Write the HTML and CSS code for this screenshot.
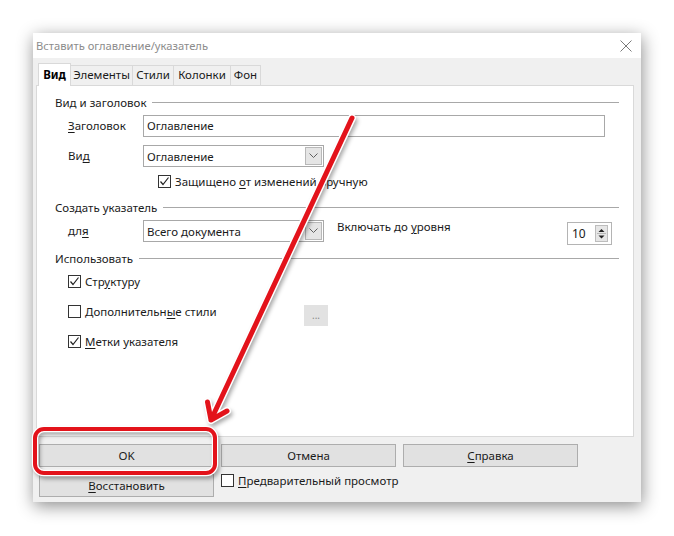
FILE: index.html
```html
<!DOCTYPE html>
<html lang="ru">
<head>
<meta charset="utf-8">
<title>Вставить оглавление/указатель</title>
<link rel="stylesheet" href="styles.css">
</head>
<body>
<div class="window">
  <div class="titlebar">
    <span class="title">Вставить оглавление/указатель</span>
    <svg class="close" width="12" height="12" viewBox="0 0 12 12"><path d="M0.5 0.5 L11.5 11.5 M11.5 0.5 L0.5 11.5" stroke="#7a7a7a" stroke-width="1" fill="none"/></svg>
  </div>
  <div class="client">
    <div class="tabs">
      <div class="tab active t1">Вид</div>
      <div class="tab t2">Элементы</div>
      <div class="tab t3">Стили</div>
      <div class="tab t4">Колонки</div>
      <div class="tab t5">Фон</div>
    </div>
    <div class="panel">
      <div class="group-head h1"><span>Вид и заголовок</span><i class="rule"></i></div>
      <div class="row r-title">
        <span class="lbl"><u>З</u>аголовок</span>
        <div class="input wide">Оглавление</div>
      </div>
      <div class="row r-type">
        <span class="lbl">Ви<u>д</u></span>
        <div class="combo"><span class="val">Оглавление</span><span class="drop"><svg width="9" height="6" viewBox="0 0 9 6"><path d="M0.5 0.5 L4.5 4.5 L8.5 0.5" stroke="#606060" stroke-width="1" fill="none"/></svg></span></div>
      </div>
      <div class="row r-protect">
        <span class="check on"><svg width="11" height="11" viewBox="0 0 11 11"><path d="M1.5 5.5 L4 8.5 L9.5 1.5" stroke="#222" stroke-width="1.2" fill="none"/></svg></span>
        <span class="ctext">Защищено <u>о</u>т изменений вручную</span>
      </div>
      <div class="group-head h2"><span>Создать указатель</span><i class="rule"></i></div>
      <div class="row r-for">
        <span class="lbl">дл<u>я</u></span>
        <div class="combo"><span class="val">Всего документа</span><span class="drop"><svg width="9" height="6" viewBox="0 0 9 6"><path d="M0.5 0.5 L4.5 4.5 L8.5 0.5" stroke="#606060" stroke-width="1" fill="none"/></svg></span></div>
        <span class="lvl">Включать до <u>у</u>ровня</span>
        <div class="spin">
          <span class="spinval">10</span>
          <span class="spinbtn">
            <svg width="11" height="15" viewBox="0 0 11 15"><path d="M2.5 6 L5.5 3 L8.5 6 Z" fill="#222"/><path d="M1 7.5 H10" stroke="#b8b8b8" stroke-width="1"/><path d="M2.5 9.5 L5.5 12.5 L8.5 9.5 Z" fill="#222"/></svg>
          </span>
        </div>
      </div>
      <div class="group-head h3"><span>Использовать</span><i class="rule"></i></div>
      <div class="crow">
        <span class="cl">
          <span class="check on"><svg width="11" height="11" viewBox="0 0 11 11"><path d="M1.5 5.5 L4 8.5 L9.5 1.5" stroke="#222" stroke-width="1.2" fill="none"/></svg></span>
          <span class="ctext">Стр<u>у</u>ктуру</span>
        </span>
      </div>
      <div class="crow">
        <span class="cl">
          <span class="check"></span>
          <span class="ctext">Дополнительн<u>ы</u>е стили</span>
        </span>
        <span class="dots">...</span>
      </div>
      <div class="crow">
        <span class="cl">
          <span class="check on"><svg width="11" height="11" viewBox="0 0 11 11"><path d="M1.5 5.5 L4 8.5 L9.5 1.5" stroke="#222" stroke-width="1.2" fill="none"/></svg></span>
          <span class="ctext"><u>М</u>етки указателя</span>
        </span>
      </div>
    </div>
    <div class="btnrow">
      <div class="btn">OK</div>
      <div class="btn">Отмена</div>
      <div class="btn"><u>С</u>правка</div>
    </div>
    <div class="btnrow second">
      <div class="btn"><u>В</u>осстановить</div>
      <div class="preview">
        <span class="check"></span>
        <span class="ctext"><u>П</u>редварительный просмотр</span>
      </div>
    </div>
  </div>
</div>
<svg class="annot" width="674" height="536" viewBox="0 0 674 536">
  <defs>
    <filter id="sh" x="-30%" y="-30%" width="160%" height="160%"><feGaussianBlur stdDeviation="2"/></filter>
  </defs>
  <g fill="none" stroke-linecap="round" stroke-linejoin="round">
    <g transform="translate(2,3)" stroke="rgba(0,0,0,0.35)" filter="url(#sh)">
      <rect x="35" y="429" width="180" height="44" rx="9" stroke-width="6"/>
      <path d="M352 118 L211 420 M207.5 402 L211 420 L227 411" stroke-width="7"/>
    </g>
    <g stroke="#ffffff">
      <rect x="35" y="429" width="180" height="44" rx="9" stroke-width="6.5"/>
      <path d="M352 118 L211 420 M207.5 402 L211 420 L227 411" stroke-width="8"/>
    </g>
    <g stroke="#e3131b">
      <rect x="35" y="429" width="180" height="44" rx="9" stroke-width="4"/>
      <path d="M352 118 L211 420 M207.5 402 L211 420 L227 411" stroke-width="5"/>
    </g>
  </g>
</svg>
</body>
</html>
```

FILE: styles.css
```css
* { box-sizing: border-box; margin: 0; padding: 0; }
html, body { background: #ffffff; }
body {
  width: 674px;
  height: 536px;
  overflow: hidden;
  position: relative;
  padding: 33px 0 0 33px;
  font-family: "Noto Sans", "Liberation Sans", sans-serif;
  font-size: 11.5px;
  color: #1b1b1b;
}
u { text-decoration: underline; text-underline-offset: 2px; }

.window {
  width: 608px;
  height: 469px;
  display: flex;
  flex-direction: column;
  background: #f0f0f0;
  box-shadow: 1px 4px 16px rgba(0, 0, 0, 0.45);
}
.titlebar {
  height: 25px;
  flex: none;
  background: #ffffff;
  display: flex;
  align-items: center;
  justify-content: space-between;
  padding: 0 9px 0 3px;
}
.title { color: #8c8c8c; font-size: 11.2px; }

.client {
  flex: 1;
  display: flex;
  flex-direction: column;
  padding: 5px 7px 5px 3px;
}
.tabs {
  height: 22px;
  display: flex;
  align-items: flex-end;
  padding-left: 2px;
  position: relative;
  z-index: 1;
}
.tab {
  height: 20px;
  line-height: 18px;
  text-align: center;
  background: #f0f0f0;
  border: 1px solid #d9d9d9;
  border-bottom: none;
  margin-left: -1px;
}
.tab.active {
  height: 23px;
  line-height: 21px;
  margin-bottom: -1px;
  margin-left: 0;
  background: #ffffff;
  font-weight: bold;
  color: #000;
}
.t1 { width: 33px; }
.t2 { width: 63px; }
.t3 { width: 42px; }
.t4 { width: 58px; }
.t5 { width: 31px; }

.panel {
  height: 352px;
  flex: none;
  background: #ffffff;
  border: 1px solid #d9d9d9;
  padding: 7px 14px 0 18px;
  display: flex;
  flex-direction: column;
}
.group-head {
  height: 18px;
  display: flex;
  align-items: center;
}
.group-head .rule {
  flex: 1;
  height: 1px;
  background: #a8a8a8;
  margin-left: 6px;
}
.h2 { margin-top: 6px; }
.h3 { margin-top: 8px; height: 16px; }

.row {
  height: 22px;
  display: flex;
  align-items: center;
  padding-left: 13px;
}
.r-title { margin-top: 4px; }
.r-type { margin-top: 8px; }
.r-protect { margin-top: 3px; padding-left: 103px; }
.r-for { margin-top: 4px; align-items: flex-start; }
.lbl { width: 75px; flex: none; line-height: 22px; }

.input {
  height: 22px;
  border: 1px solid #a8a8a8;
  padding-left: 3px;
  line-height: 20px;
}
.input.wide { width: 462px; }
.combo {
  width: 181px;
  height: 22px;
  flex: none;
  border: 1px solid #a8a8a8;
  display: flex;
  align-items: center;
  justify-content: space-between;
  padding: 0 1px 0 3px;
}
.drop {
  width: 17px;
  height: 18px;
  background: #e5e5e5;
  border: 1px solid #b8b8b8;
  display: flex;
  align-items: center;
  justify-content: center;
}
.lvl {
  margin-left: 13px;
  line-height: 16px;
  margin-top: -1px;
}
.spin {
  margin-left: auto;
  margin-right: 7px;
  margin-top: 2px;
  width: 45px;
  height: 23px;
  border: 1px solid #b4b4b4;
  display: flex;
  align-items: center;
  justify-content: space-between;
  padding: 0 3px 0 4px;
  font-size: 12px;
}
.spinbtn {
  width: 13px;
  height: 17px;
  background: #e6e6e6;
  border: 1px solid #bdbdbd;
  display: flex;
  align-items: center;
  justify-content: center;
}

.check {
  width: 13px;
  height: 13px;
  flex: none;
  border: 1px solid #333333;
  background: #ffffff;
  display: flex;
  align-items: center;
  justify-content: center;
}
.ctext { margin-left: 4px; }

.crow {
  height: 30px;
  display: flex;
  align-items: center;
  padding-left: 13px;
}
.cl {
  width: 236px;
  flex: none;
  display: flex;
  align-items: center;
}
.dots {
  align-self: flex-end;
  width: 24px;
  height: 21px;
  background: #e2e2e2;
  color: #8a8a8a;
  font-size: 10px;
  text-align: center;
  line-height: 21px;
}

.btnrow {
  display: flex;
  gap: 7px;
  padding-left: 3px;
  margin-top: 7px;
}
.btn {
  width: 175px;
  height: 23px;
  flex: none;
  background: #e1e1e1;
  border: 1px solid #adadad;
  text-align: center;
  line-height: 21px;
}
.second { align-items: flex-start; }
.preview {
  display: flex;
  align-items: center;
  height: 13px;
}

.annot {
  position: absolute;
  left: 0;
  top: 0;
  pointer-events: none;
}
```
